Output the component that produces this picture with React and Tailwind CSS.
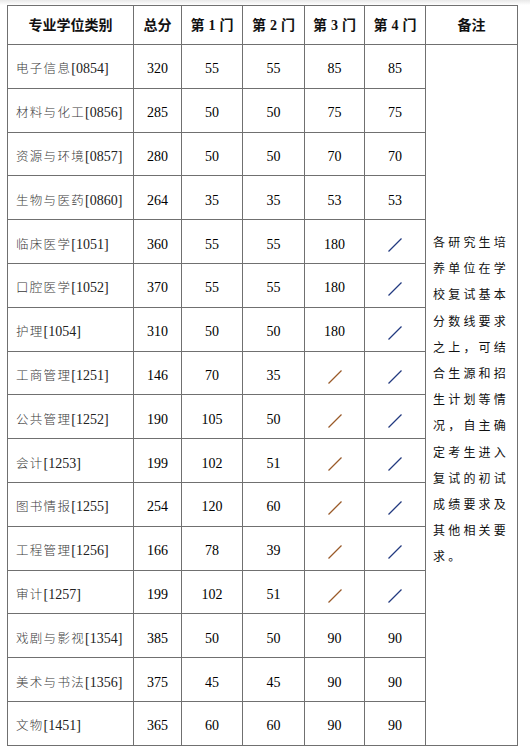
import React from "react";

const rows = [
  ["电子信息", "0854", "320", "55", "55", "85", "85"],
  ["材料与化工", "0856", "285", "50", "50", "75", "75"],
  ["资源与环境", "0857", "280", "50", "50", "70", "70"],
  ["生物与医药", "0860", "264", "35", "35", "53", "53"],
  ["临床医学", "1051", "360", "55", "55", "180", "/"],
  ["口腔医学", "1052", "370", "55", "55", "180", "/"],
  ["护理", "1054", "310", "50", "50", "180", "/"],
  ["工商管理", "1251", "146", "70", "35", "/", "/"],
  ["公共管理", "1252", "190", "105", "50", "/", "/"],
  ["会计", "1253", "199", "102", "51", "/", "/"],
  ["图书情报", "1255", "254", "120", "60", "/", "/"],
  ["工程管理", "1256", "166", "78", "39", "/", "/"],
  ["审计", "1257", "199", "102", "51", "/", "/"],
  ["戏剧与影视", "1354", "385", "50", "50", "90", "90"],
  ["美术与书法", "1356", "375", "45", "45", "90", "90"],
  ["文物", "1451", "365", "60", "60", "90", "90"],
];

const notes = [
  "各研究生培",
  "养单位在学",
  "校复试基本",
  "分数线要求",
  "之上，可结",
  "合生源和招",
  "生计划等情",
  "况，自主确",
  "定考生进入",
  "复试的初试",
  "成绩要求及",
  "其他相关要",
  "求。",
];

function Slash({ color }) {
  return (
    <svg width="14" height="14" viewBox="0 0 14 14" className="inline-block align-middle">
      <line x1="0.5" y1="13.5" x2="13.5" y2="0.5" stroke={color} strokeWidth="1.3" />
    </svg>
  );
}

const serif = "font-['Liberation_Serif','Noto_Sans_CJK_SC',serif]";
const cell = "border border-[#707070] p-0";

function Num({ v, slashColor }) {
  if (v === "/") return <Slash color={slashColor} />;
  return <span>{v}</span>;
}

export default function App() {
  return (
    <div className="bg-white w-[530px] h-[756px] overflow-hidden">
      <div className="h-[5px] bg-gradient-to-b from-[#e8e8e8] to-white" />
      <div className="pl-[7px]">
        <table className={`table-fixed border-collapse w-[510px] ${serif} text-black`}>
          <colgroup>
            <col className="w-[126px]" />
            <col className="w-[48px]" />
            <col className="w-[61px]" />
            <col className="w-[62px]" />
            <col className="w-[60px]" />
            <col className="w-[61px]" />
            <col className="w-[92px]" />
          </colgroup>
          <thead>
            <tr className="h-[39px]">
              {["专业学位类别", "总分", "第 1 门", "第 2 门", "第 3 门", "第 4 门", "备注"].map((h) => (
                <th key={h} className={`${cell} text-[14px] font-bold text-center align-middle whitespace-pre text-[#111]`}>
                  {h.split(" ").map((part, k, arr) => (
                    <React.Fragment key={k}>
                      {part}
                      {k < arr.length - 1 && <span className="inline-block w-[4px]" />}
                    </React.Fragment>
                  ))}
                </th>
              ))}
            </tr>
          </thead>
          <tbody>
            {rows.map((r, i) => (
              <tr key={r[1]} className="h-[43.8px]">
                <td className={`${cell} pl-[8px] pt-[4px] align-middle text-left whitespace-nowrap`}>
                  <span className="font-['Noto_Sans_CJK_SC',sans-serif] text-[12.5px] tracking-[1.3px] text-[#3a3a3a] font-light">
                    {r[0]}
                  </span>
                  <span className="font-['Liberation_Serif',serif] text-[14px] text-[#222]">[{r[1]}]</span>
                </td>
                <td className={`${cell} pt-[5px] text-center align-middle text-[14px]`}>{r[2]}</td>
                <td className={`${cell} pt-[5px] text-center align-middle text-[14px]`}>{r[3]}</td>
                <td className={`${cell} pt-[5px] text-center align-middle text-[14px]`}>{r[4]}</td>
                <td className={`${cell} pt-[5px] text-center align-middle text-[14px]`}>
                  <Num v={r[5]} slashColor="#9a5a28" />
                </td>
                <td className={`${cell} pt-[5px] text-center align-middle text-[14px]`}>
                  <Num v={r[6]} slashColor="#223a80" />
                </td>
                {i === 0 && (
                  <td rowSpan={16} className={`${cell} align-middle pl-[7px] pt-[9px]`}>
                    <div className="font-['Noto_Sans_CJK_SC',sans-serif] text-[12px] tracking-[3.2px] leading-[26.2px] text-[#111]">
                      {notes.map((n) => (
                        <div key={n} className="whitespace-nowrap">{n}</div>
                      ))}
                    </div>
                  </td>
                )}
              </tr>
            ))}
          </tbody>
        </table>
      </div>
    </div>
  );
}
